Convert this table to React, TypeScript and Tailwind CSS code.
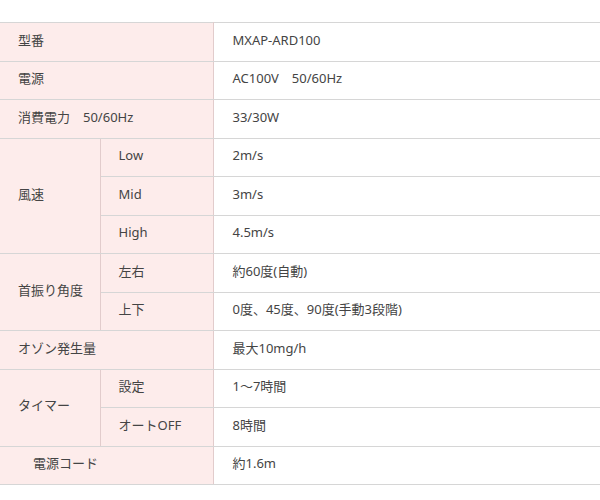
const rows: { label?: string; span?: number; sub?: string; value: string; full?: boolean; indent?: boolean }[] = [
  { label: '型番', full: true, value: 'MXAP-ARD100' },
  { label: '電源', full: true, value: 'AC100V\u300050/60Hz' },
  { label: '消費電力\u300050/60Hz', full: true, value: '33/30W' },
  { label: '風速', span: 3, sub: 'Low', value: '2m/s' },
  { sub: 'Mid', value: '3m/s' },
  { sub: 'High', value: '4.5m/s' },
  { label: '首振り角度', span: 2, sub: '左右', value: '約60度(自動)' },
  { sub: '上下', value: '0度、45度、90度(手動3段階)' },
  { label: 'オゾン発生量', full: true, value: '最大10mg/h' },
  { label: 'タイマー', span: 2, sub: '設定', value: '1～7時間' },
  { sub: 'オートOFF', value: '8時間' },
  { label: '電源コード', full: true, indent: true, value: '約1.6m' },
];

export default function App() {
  return (
    <div
      className="min-h-[500px] bg-white pt-[22px] text-[13px] text-[#444]"
      style={{ fontFamily: '"Noto Sans", "Noto Sans CJK JP", sans-serif' }}
    >
      <table className="w-full border-collapse">
        <tbody>
          {rows.map((r, i) => (
            <tr key={i} className="h-[38.5px]">
              {r.label && (
                <td
                  rowSpan={r.span}
                  colSpan={r.full ? 2 : 1}
                  className={`border border-l-0 border-[#d6d6d6] border-r-[#e2cccc] bg-[#fdeceb] pb-[3px] align-middle ${r.indent ? 'pl-[33px]' : 'pl-[18px]'} ${r.full ? '' : 'w-[100px]'}`}
                >
                  {r.label}
                </td>
              )}
              {!r.full && (
                <td className="w-[113px] border border-[#d6d6d6] border-l-[#d8c6c6] border-r-[#e2cccc] bg-[#fdeceb] pb-[3px] pl-[18px]">
                  {r.sub}
                </td>
              )}
              <td className="border border-r-0 border-[#d6d6d6] border-l-[#e2cccc] pb-[3px] pl-[19px]">{r.value}</td>
            </tr>
          ))}
        </tbody>
      </table>
    </div>
  );
}
